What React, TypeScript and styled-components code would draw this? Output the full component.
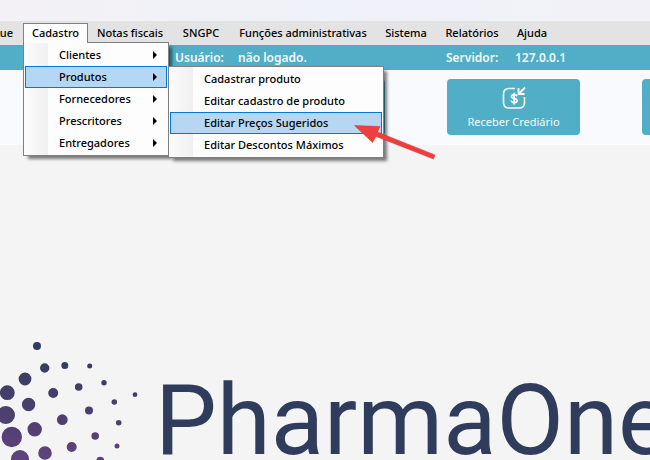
import React from "react";
import styled, { createGlobalStyle, css } from "styled-components";

const GlobalStyle = createGlobalStyle`
  *, *::before, *::after { box-sizing: border-box; }
  body {
    margin: 0;
    background: #f4f4f4;
    font-family: "Noto Sans", "Open Sans", sans-serif;
    font-size: 11px;
    font-weight: 500;
    color: #000;
  }
  button { font: inherit; color: inherit; border: 0; margin: 0; cursor: default; }
`;

const Page = styled.div`
  display: flex;
  flex-direction: column;
  height: 100vh;
  overflow: hidden;
`;

const TitleStrip = styled.div`
  flex: none;
  height: 21px;
  background: linear-gradient(90deg, #f3f1f6, #eff2f8 50%, #f3f1f8);
`;

const MenuBar = styled.nav`
  flex: none;
  display: flex;
  height: 24px;
  padding-top: 2px;
  background: #e3e3e3;
`;

const MenuSlot = styled.div<{ $width: number }>`
  position: relative;
  flex: none;
  width: ${(p) => p.$width}px;
  display: flex;
`;

const MenuButton = styled.button<{ $open?: boolean; $clipped?: boolean }>`
  flex: 1;
  min-width: 0;
  height: 20px;
  padding: 0 ${(p) => (p.$clipped ? 10 : 0)}px 2px 0;
  display: flex;
  align-items: center;
  justify-content: ${(p) => (p.$clipped ? "flex-end" : "center")};
  white-space: nowrap;
  background: none;
  ${(p) =>
    p.$open &&
    css`
      background: #fdfdfd;
      border: 1px solid #808080;
      border-bottom: 0;
      position: relative;
      z-index: 3;
    `}
`;

const Menu = styled.div<{ $nested?: boolean }>`
  position: absolute;
  z-index: 2;
  top: ${(p) => (p.$nested ? 0 : 19)}px;
  left: ${(p) => (p.$nested ? "calc(100% + 1px)" : 0)};
  width: ${(p) => (p.$nested ? 216 : 146)}px;
  padding: 1px;
  background: linear-gradient(90deg, #fcfcfc, #f0f0f0 24px, #fdfdfd 24px);
  border: 1px solid #808080;
  box-shadow: 4px 4px 3px -1px rgba(0, 0, 0, 0.5);
`;

const MenuRow = styled.div`
  position: relative;
`;

const MenuItem = styled.button<{ $active?: boolean }>`
  display: flex;
  align-items: center;
  justify-content: space-between;
  width: 100%;
  height: 22px;
  padding: 0 9px 2px 33px;
  border: 1px solid ${(p) => (p.$active ? "#0078d7" : "transparent")};
  background: ${(p) => (p.$active ? "#b5d7f3" : "none")};
  white-space: nowrap;
  text-align: left;
`;

const Chevron = styled.svg`
  flex: none;
  width: 4px;
  height: 8px;
  margin-top: 2px;
`;

const Pointer = styled.svg`
  position: absolute;
  z-index: 4;
  left: 184px;
  top: 54px;
  width: 84px;
  height: 40px;
  pointer-events: none;
`;

const StatusBar = styled.div`
  flex: none;
  display: grid;
  grid-template-columns: 63px 208px 69px auto;
  align-items: center;
  height: 25px;
  padding-left: 175px;
  background: #50afc6;
  color: #f2fafc;
  font-size: 12px;
  font-weight: 600;
  white-space: nowrap;
`;

const Toolbar = styled.div`
  flex: none;
  display: flex;
  gap: 62px;
  height: 75px;
  padding: 9px 0 0 57px;
  background: #f8fafd;
`;

const ToolButton = styled.button`
  flex: none;
  display: flex;
  flex-direction: column;
  align-items: center;
  gap: 3px;
  width: 133px;
  height: 56px;
  padding: 7px 0 0;
  border-radius: 4px;
  background: #50afc6;
  color: #f4fbfd;
  font-weight: 400;
  line-height: 18px;
`;

const Workspace = styled.main`
  flex: 1;
  min-height: 0;
  overflow: hidden;
  padding-top: 190px;
`;

const Brand = styled.div`
  display: flex;
  align-items: flex-start;
`;

const Dots = styled.svg`
  flex: none;
  width: 155px;
  height: 160px;
`;

const Wordmark = styled.h1`
  margin: 28px 0 0;
  font-family: Roboto, "Liberation Sans", sans-serif;
  font-size: 98px;
  font-weight: 400;
  line-height: 116px;
  color: #2f3c5c;
`;

type Entry = { label: string; active?: boolean };

const registrations: Entry[] = [
  { label: "Clientes" },
  { label: "Produtos", active: true },
  { label: "Fornecedores" },
  { label: "Prescritores" },
  { label: "Entregadores" },
];

const productActions: Entry[] = [
  { label: "Cadastrar produto" },
  { label: "Editar cadastro de produto" },
  { label: "Editar Preços Sugeridos", active: true },
  { label: "Editar Descontos Máximos" },
];

const otherMenus = [
  { label: "Notas fiscais", width: 84 },
  { label: "SNGPC", width: 58 },
  { label: "Funções administrativas", width: 146 },
  { label: "Sistema", width: 60 },
  { label: "Relatórios", width: 72 },
  { label: "Ajuda", width: 48 },
];

const dots: [number, number, number][] = [
  [37, 346, 4], [44.7, 368, 4.7], [64.8, 365.6, 3.5], [89.7, 366, 2.5],
  [25, 379, 6.4], [104, 382.8, 2.7], [78.7, 387, 3.8], [7.3, 392.7, 7.4],
  [53.2, 393, 5], [135, 394.7, 2.4], [114.3, 402, 2.8], [28.6, 404.5, 6.7],
  [6, 415, 9], [89, 410.5, 4], [62.3, 419.7, 5.4], [118.7, 422.7, 2.8],
  [34.7, 429.3, 7.2], [11.8, 437, 10.2], [95.2, 436, 3.8], [71.7, 447, 5],
  [117, 446, 2.5], [45, 453, 6.8], [20, 459, 9], [100.3, 460.5, 3.8],
];

function ReceiveIcon() {
  return (
    <svg width="24" height="24" viewBox="0 0 24 24" fill="none" stroke="currentColor" strokeWidth="1.6" aria-hidden="true">
      <path d="M13 2.5H7C3.5 2.5 1.5 4.5 1.5 8v8.500c0 3.500 2 5.500 5.500 5.500h10c3.500 0 5.500-2 5.500-5.500V11" />
      <path d="M23 1.500l-6.500 6.500M16.500 2v6h6" strokeWidth="1.800" />
      <path d="M14.900 10.300c-.3-1.200-1.300-1.700-2.700-1.700-1.600 0-2.700.7-2.700 1.900 0 2.800 5.700 1.300 5.700 4.100 0 1.300-1.200 2-3 2-1.700 0-2.800-.7-3-2.100M12.200 6.800v11.700" strokeWidth="1.700" />
    </svg>
  );
}

export default function App() {
  return (
    <Page>
      <GlobalStyle />
      <TitleStrip />
      <MenuBar>
        <MenuSlot $width={23}>
          <MenuButton $clipped>que</MenuButton>
        </MenuSlot>
        <MenuSlot $width={65}>
          <MenuButton $open aria-expanded="true">Cadastro</MenuButton>
          <Menu>
            {registrations.map((item) => (
              <MenuRow key={item.label}>
                <MenuItem $active={item.active}>
                  {item.label}
                  <Chevron viewBox="0 0 4 8" aria-hidden="true">
                    <path d="M0 0L4 4L0 8Z" fill="#000" />
                  </Chevron>
                </MenuItem>
                {item.active && (
                  <Menu $nested>
                    {productActions.map((action) => (
                      <MenuItem key={action.label} $active={action.active}>
                        {action.label}
                      </MenuItem>
                    ))}
                    <Pointer viewBox="0 0 84 40" aria-hidden="true">
                      <path d="M1.500 4.500L27 5.500L24.500 11L82 34L80.500 38L23 15.500L19.500 21.500Z" fill="#f03e3e" stroke="#c43a3e" strokeWidth="0.500" />
                    </Pointer>
                  </Menu>
                )}
              </MenuRow>
            ))}
          </Menu>
        </MenuSlot>
        {otherMenus.map((menu) => (
          <MenuSlot key={menu.label} $width={menu.width}>
            <MenuButton>{menu.label}</MenuButton>
          </MenuSlot>
        ))}
      </MenuBar>
      <StatusBar>
        <span>Usuário:</span>
        <span>não logado.</span>
        <span>Servidor:</span>
        <span>127.0.0.1</span>
      </StatusBar>
      <Toolbar>
        <ToolButton />
        <ToolButton />
        <ToolButton>
          <ReceiveIcon />
          Receber Crediário
        </ToolButton>
        <ToolButton />
      </Toolbar>
      <Workspace>
        <Brand>
          <Dots viewBox="0 335 155 160" aria-hidden="true">
            <defs>
              <linearGradient id="dotTint" gradientUnits="userSpaceOnUse" x1="0" y1="345" x2="0" y2="460">
                <stop offset="0" stopColor="#2f3c5c" />
                <stop offset="0.500" stopColor="#473f6c" />
                <stop offset="1" stopColor="#60437c" />
              </linearGradient>
            </defs>
            <g fill="url(#dotTint)">
              <path d={dots.map(([x, y, r]) => `M${x - r} ${y}a${r} ${r} 0 1 0 ${2 * r} 0a${r} ${r} 0 1 0 ${-2 * r} 0Z`).join("")} />
            </g>
          </Dots>
          <Wordmark>PharmaOne</Wordmark>
        </Brand>
      </Workspace>
    </Page>
  );
}
